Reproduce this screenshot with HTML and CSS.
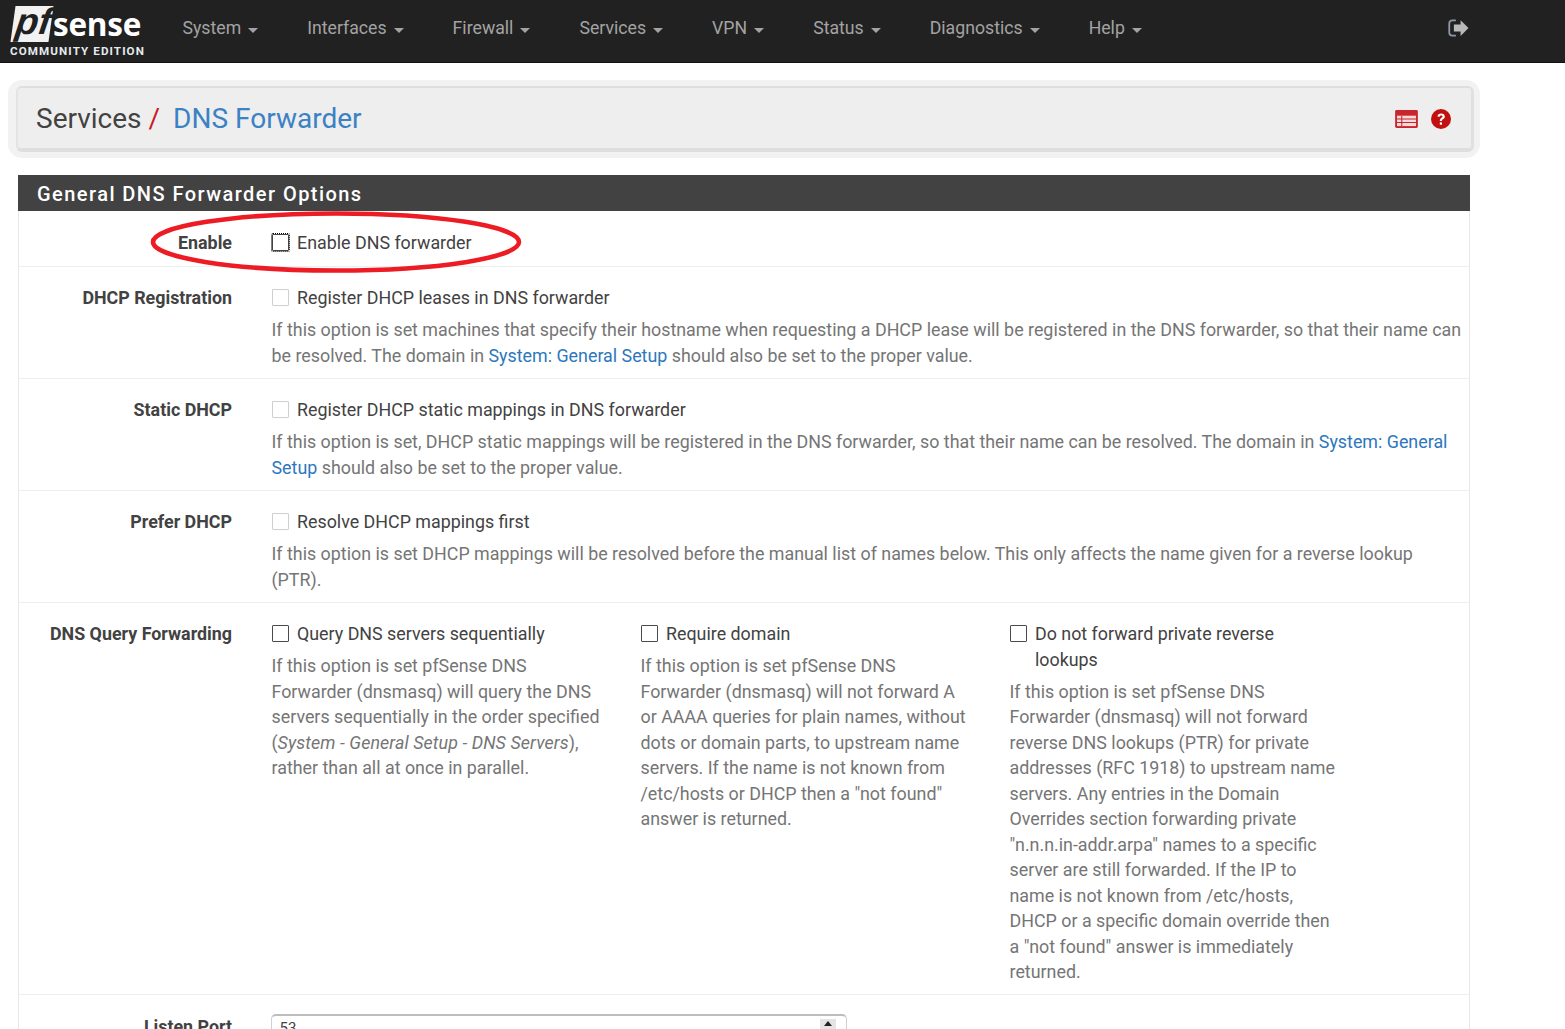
FILE: index.html
```html
<!DOCTYPE html>
<html lang="en">
<head>
<meta charset="utf-8">
<title>pfSense - Services: DNS Forwarder</title>
<link rel="stylesheet" href="styles.css">
</head>
<body>
<header class="navbar">
  <a class="brand">
    <span class="brand-top"><span class="brand-pf">pf</span><span class="brand-sense">sense</span></span>
    <span class="brand-sub">COMMUNITY EDITION</span>
  </a>
  <nav class="menu">
    <a class="menu-item">System<i class="caret"></i></a>
    <a class="menu-item">Interfaces<i class="caret"></i></a>
    <a class="menu-item">Firewall<i class="caret"></i></a>
    <a class="menu-item">Services<i class="caret"></i></a>
    <a class="menu-item">VPN<i class="caret"></i></a>
    <a class="menu-item">Status<i class="caret"></i></a>
    <a class="menu-item">Diagnostics<i class="caret"></i></a>
    <a class="menu-item">Help<i class="caret"></i></a>
  </nav>
  <svg class="logout" viewBox="0 0 20 17" aria-hidden="true">
    <path d="M7.5 1.2H4.2C2.4 1.2 1.2 2.4 1.2 4.2v8.6c0 1.8 1.2 3 3 3h3.3" fill="none" stroke="#8f99a8" stroke-width="1.7"/>
    <path d="M12 1l7.5 7.5L12 16v-4.2H5.6V5.2H12z" fill="#b9b9b9"/>
  </svg>
</header>

<div class="crumb-wrap">
  <div class="crumb">
    <h1 class="crumb-title">Services<span class="crumb-sep">/</span><a class="crumb-link">DNS Forwarder</a></h1>
    <div class="crumb-icons">
      <svg class="icon-table" viewBox="0 0 24 19" aria-hidden="true">
        <rect width="24" height="19" rx="1.5" fill="#c9252d"/>
        <path d="M2 6h20v11H2z" fill="#f3d9d9"/>
        <path d="M2 9.5h20M2 13.2h20M7 6v11" stroke="#c9252d" stroke-width="1.1"/>
      </svg>
      <svg class="icon-help" viewBox="0 0 20 20" aria-hidden="true">
        <circle cx="10" cy="10" r="10" fill="#c01010"/>
        <path d="M6.4 7.6C6.7 5.6 8.1 4.4 10.2 4.4c2.1 0 3.6 1.3 3.6 3 0 1.4-.8 2.1-1.8 2.8-.8.5-1.1.9-1.1 1.8H8.8c0-1.6.5-2.4 1.5-3.1.8-.6 1.2-.9 1.2-1.5 0-.6-.5-1-1.3-1-.9 0-1.4.5-1.6 1.4z" fill="#fff"/>
        <rect x="8.8" y="13.4" width="2.2" height="2.3" fill="#fff"/>
      </svg>
    </div>
  </div>
</div>

<main class="panel">
  <h2 class="panel-head">General DNS Forwarder Options</h2>

  <section class="row row-enable">
    <div class="row-label">Enable</div>
    <div class="row-body">
      <label class="check"><span class="box box-focus"></span><span>Enable DNS forwarder</span></label>
    </div>
    <svg class="circle" viewBox="0 0 372 62" aria-hidden="true"><ellipse cx="186" cy="31" rx="183" ry="28.5" fill="none" stroke="#ed1c24" stroke-width="4.6"/></svg>
  </section>

  <section class="row">
    <div class="row-label">DHCP Registration</div>
    <div class="row-body">
      <label class="check"><span class="box box-light"></span><span>Register DHCP leases in DNS forwarder</span></label>
      <p class="help">If this option is set machines that specify their hostname when requesting a DHCP lease will be registered in the DNS forwarder, so that their name can be resolved. The domain in <a class="link">System: General Setup</a> should also be set to the proper value.</p>
    </div>
  </section>

  <section class="row">
    <div class="row-label">Static DHCP</div>
    <div class="row-body">
      <label class="check"><span class="box box-light"></span><span>Register DHCP static mappings in DNS forwarder</span></label>
      <p class="help">If this option is set, DHCP static mappings will be registered in the DNS forwarder, so that their name can be resolved. The domain in <a class="link">System: General Setup</a> should also be set to the proper value.</p>
    </div>
  </section>

  <section class="row">
    <div class="row-label">Prefer DHCP</div>
    <div class="row-body">
      <label class="check"><span class="box box-light"></span><span>Resolve DHCP mappings first</span></label>
      <p class="help">If this option is set DHCP mappings will be resolved before the manual list of names below. This only affects the name given for a reverse lookup (PTR).</p>
    </div>
  </section>

  <section class="row">
    <div class="row-label">DNS Query Forwarding</div>
    <div class="row-cols">
      <div class="col">
        <label class="check"><span class="box"></span><span>Query DNS servers sequentially</span></label>
        <p class="help">If this option is set pfSense DNS Forwarder (dnsmasq) will query the DNS servers sequentially in the order specified (<em class="ital">System - General Setup - DNS Servers</em>), rather than all at once in parallel.</p>
      </div>
      <div class="col">
        <label class="check"><span class="box"></span><span>Require domain</span></label>
        <p class="help">If this option is set pfSense DNS Forwarder (dnsmasq) will not forward A or AAAA queries for plain names, without dots or domain parts, to upstream name servers. If the name is not known from /etc/hosts or DHCP then a "not found" answer is returned.</p>
      </div>
      <div class="col">
        <label class="check"><span class="box"></span><span>Do not forward private reverse lookups</span></label>
        <p class="help">If this option is set pfSense DNS Forwarder (dnsmasq) will not forward reverse DNS lookups (PTR) for private addresses (RFC 1918) to upstream name servers. Any entries in the Domain Overrides section forwarding private "n.n.n.in-addr.arpa" names to a specific server are still forwarded. If the IP to name is not known from /etc/hosts, DHCP or a specific domain override then a "not found" answer is immediately returned.</p>
      </div>
    </div>
  </section>

  <section class="row row-last">
    <div class="row-label">Listen Port</div>
    <div class="row-body">
      <div class="input"><span>53</span><span class="spin"></span></div>
    </div>
  </section>
</main>
</body>
</html>
```
FILE: styles.css
```css
* { box-sizing: border-box; }
html, body { height: 1029px; overflow: hidden; }
body {
  margin: 0;
  background: #fff;
  color: #424242;
  font-family: Roboto, "Liberation Sans", sans-serif;
  font-size: 17.85px;
  line-height: 25.5px;
}
p, h1, h2 { margin: 0; }

.navbar {
  height: 63px;
  background: #212121;
  border-bottom: 1px solid #111;
  display: flex;
  align-items: center;
}
.brand {
  width: 158px;
  flex: none;
  padding: 1px 0 0 10px;
  display: flex;
  flex-direction: column;
  color: #fff;
}
.brand-top { display: flex; align-items: center; height: 38px; }
.brand-pf {
  background: #f2f2f2;
  color: #212121;
  font: italic 700 37px/31px "Liberation Sans", sans-serif;
  width: 38px;
  height: 36px;
  padding-left: 3px;
  margin-left: 3px;
  transform: skewX(-8deg);
}
.brand-sense {
  font: 700 31.5px/36px "Open Sans", sans-serif;
  letter-spacing: -.2px;
  margin-left: 2px;
}
.brand-sub {
  font: 700 11.6px/13px Roboto, sans-serif;
  letter-spacing: 1.1px;
  margin-top: 2px;
  color: #e6eaee;
  white-space: nowrap;
}
.menu { display: flex; margin-bottom: 4px; flex: 1; }
.menu-item {
  color: #a3a3a3;
  font-size: 17.7px;
  padding: 0 24.5px;
  white-space: nowrap;
  display: flex;
  align-items: center;
}
.caret {
  margin-left: 7px;
  margin-top: 2px;
  border-top: 5px solid #a3a3a3;
  border-left: 5px solid transparent;
  border-right: 5px solid transparent;
}
.logout { width: 21px; height: 18px; margin: 0 96px 7px 0; flex: none; }

.crumb-wrap {
  margin: 17px 85px 0 8px;
  height: 78px;
  padding: 6px 0 0 8px;
  background: #f2f2f2;
  border-radius: 14px;
}
.crumb {
  height: 66px;
  margin-right: 6px;
  background: #eeeeee;
  border-top: 2px solid #dedede;
  border-bottom: 4px solid #dedede;
  border-right: 3px solid #e0e0e0;
  border-left: 2px solid #e4e4e4;
  border-radius: 6px;
  padding: 2px 20px 0 18px;
  display: flex;
  align-items: center;
  justify-content: space-between;
}
.crumb-title { font-size: 28px; font-weight: 400; line-height: 34px; color: #424242; }
.crumb-sep { color: #c71c22; margin: 0 13px 0 7px; }
.crumb-link { color: #3a82c4; }
.crumb-icons { display: flex; align-items: center; gap: 13px; }
.icon-table { width: 23px; height: 18px; }
.icon-help { width: 20px; height: 20px; }

.panel {
  margin: 17px 95px 0 18px;
  border-left: 1px solid #e8e8e8;
  border-right: 1px solid #e8e8e8;
}
.panel-head {
  margin: 0 -1px;
  height: 36px;
  background: #424242;
  color: #fff;
  font-size: 20px;
  font-weight: 500;
  letter-spacing: 1.45px;
  line-height: 38px;
  padding-left: 19px;
}
.row {
  display: flex;
  position: relative;
  border-bottom: 1px solid #eeeeee;
  padding: 18.5px 0 9.5px;
}
.row-enable { height: 55.5px; padding-top: 19px; }
.row-last { border-bottom: 0; padding-top: 19px; }
.row-label {
  width: 213px;
  flex: none;
  text-align: right;
  font-weight: 700;
  color: #424242;
}
.row-body { margin-left: 39.5px; flex: 1; padding-right: 4px; }
.row-cols { margin-left: 39.5px; flex: 1; display: flex; }
.col { width: 369px; flex: none; padding-right: 40px; }
.check { display: flex; gap: 8.5px; align-items: flex-start; }
.box {
  flex: none;
  width: 17px;
  height: 17px;
  margin-top: 4px;
  border: 1.6px solid #4a4a4a;
  border-radius: 1px;
  background: #fff;
}
.box-light { border-color: #cfcfcf; border-width: 1.3px; }
.box-focus { border-color: #444; outline: 1px dotted #000; outline-offset: 0; }
.help { margin-top: 6.5px; color: #757575; }
.link { color: #2c77bd; }
.ital { letter-spacing: .08px; }
.circle {
  position: absolute;
  left: 131px;
  top: 0;
  width: 372px;
  height: 62px;
}
.input {
  width: 576px;
  height: 40px;
  margin-left: -1px;
  border: 1px solid #cfcfcf;
  border-top: 2px solid #bdbdbd;
  border-radius: 5px;
  padding: 0 9px 0 8px;
  font-size: 15px;
  display: flex;
  justify-content: space-between;
}
.spin {
  width: 16px;
  height: 10px;
  margin-top: 3px;
  margin-right: 1px;
  background: #e4e4e4;
  position: relative;
}
.spin::after {
  content: "";
  position: absolute;
  left: 4px;
  top: 2px;
  border-bottom: 5px solid #222;
  border-left: 4px solid transparent;
  border-right: 4px solid transparent;
}
```
